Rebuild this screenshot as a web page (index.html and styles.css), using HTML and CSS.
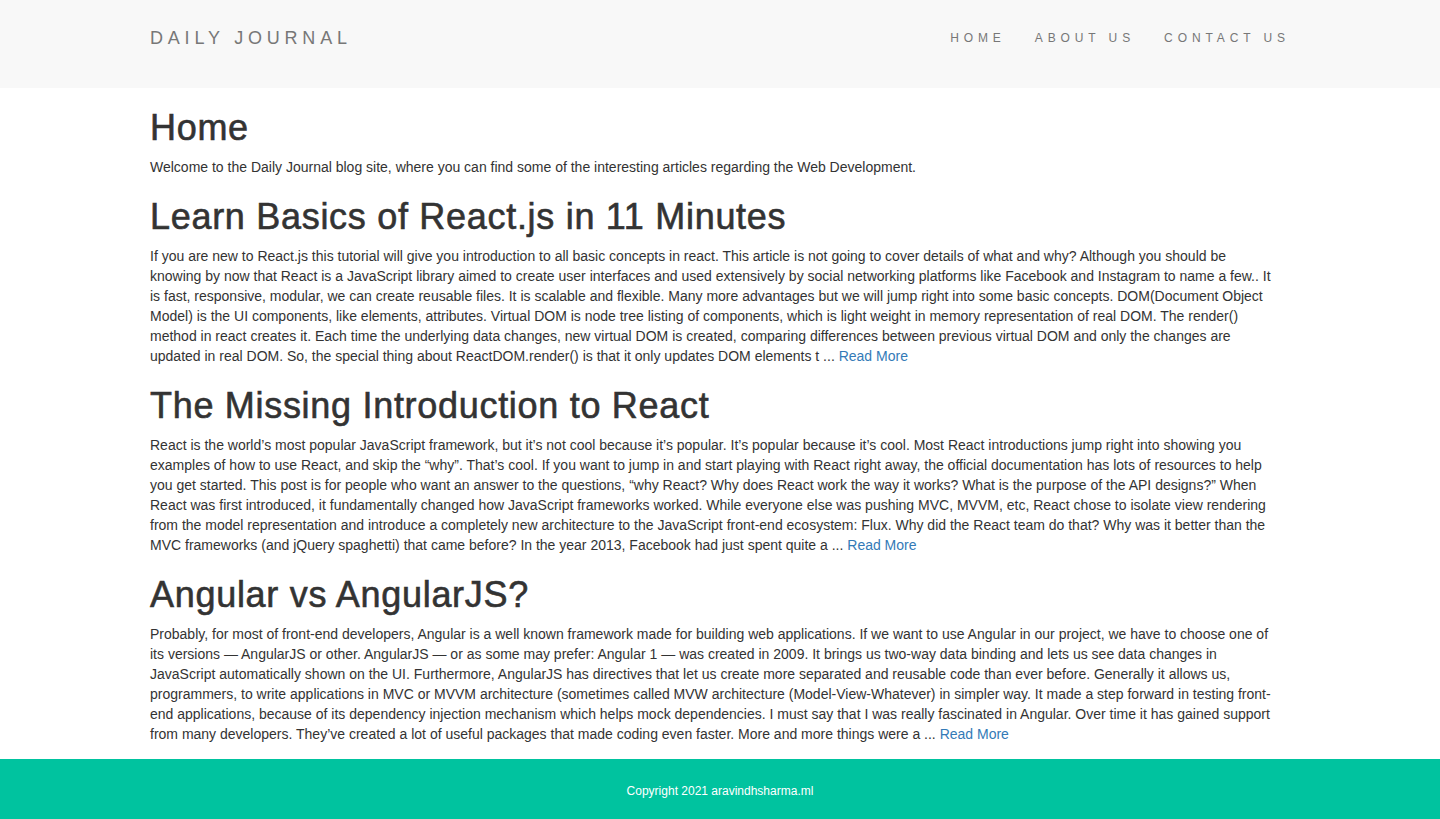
FILE: index.html
```html
<!DOCTYPE html>
<html lang="en">
<head>
<meta charset="utf-8">
<title>Daily Journal</title>
<link rel="stylesheet" href="styles.css">
</head>
<body>
<nav class="navbar">
  <div class="container navbar-inner">
    <a class="brand" href="#">DAILY JOURNAL</a>
    <ul class="nav-links">
      <li><a href="#">HOME</a></li>
      <li><a href="#">ABOUT US</a></li>
      <li><a href="#">CONTACT US</a></li>
    </ul>
  </div>
</nav>
<main class="container content">
  <h1>Home</h1>
  <p>Welcome to the Daily Journal blog site, where you can find some of the interesting articles regarding the Web Development.</p>

  <h1>Learn Basics of React.js in 11 Minutes</h1>
  <p>If you are new to React.js this tutorial will give you introduction to all basic concepts in react. This article is not going to cover details of what and why? Although you should be<br>knowing by now that React is a JavaScript library aimed to create user interfaces and used extensively by social networking platforms like Facebook and Instagram to name a few.. It<br>is fast, responsive, modular, we can create reusable files. It is scalable and flexible. Many more advantages but we will jump right into some basic concepts. DOM(Document Object<br>Model) is the UI components, like elements, attributes. Virtual DOM is node tree listing of components, which is light weight in memory representation of real DOM. The render()<br>method in react creates it. Each time the underlying data changes, new virtual DOM is created, comparing differences between previous virtual DOM and only the changes are<br>updated in real DOM. So, the special thing about ReactDOM.render() is that it only updates DOM elements t ... <a class="more" href="#">Read More</a></p>

  <h1>The Missing Introduction to React</h1>
  <p>React is the world’s most popular JavaScript framework, but it’s not cool because it’s popular. It’s popular because it’s cool. Most React introductions jump right into showing you<br>examples of how to use React, and skip the “why”. That’s cool. If you want to jump in and start playing with React right away, the official documentation has lots of resources to help<br>you get started. This post is for people who want an answer to the questions, “why React? Why does React work the way it works? What is the purpose of the API designs?” When<br>React was first introduced, it fundamentally changed how JavaScript frameworks worked. While everyone else was pushing MVC, MVVM, etc, React chose to isolate view rendering<br>from the model representation and introduce a completely new architecture to the JavaScript front-end ecosystem: Flux. Why did the React team do that? Why was it better than the<br>MVC frameworks (and jQuery spaghetti) that came before? In the year 2013, Facebook had just spent quite a ... <a class="more" href="#">Read More</a></p>

  <h1>Angular vs AngularJS?</h1>
  <p>Probably, for most of front-end developers, Angular is a well known framework made for building web applications. If we want to use Angular in our project, we have to choose one of<br>its versions — AngularJS or other. AngularJS — or as some may prefer: Angular 1 — was created in 2009. It brings us two-way data binding and lets us see data changes in<br>JavaScript automatically shown on the UI. Furthermore, AngularJS has directives that let us create more separated and reusable code than ever before. Generally it allows us,<br>programmers, to write applications in MVC or MVVM architecture (sometimes called MVW architecture (Model-View-Whatever) in simpler way. It made a step forward in testing front-<br>end applications, because of its dependency injection mechanism which helps mock dependencies. I must say that I was really fascinated in Angular. Over time it has gained support<br>from many developers. They’ve created a lot of useful packages that made coding even faster. More and more things were a ... <a class="more" href="#">Read More</a></p>
</main>
<footer class="footer">
  <p>Copyright 2021 aravindhsharma.ml</p>
</footer>
</body>
</html>
```

FILE: styles.css
```css
* { box-sizing: border-box; }

html, body {
  margin: 0;
  padding: 0;
}

body {
  font-family: "Liberation Sans", Arial, Helvetica, sans-serif;
  font-size: 14px;
  line-height: 20px;
  color: #333333;
  background: #ffffff;
}

a { text-decoration: none; }

.container {
  width: 1170px;
  margin: 0 auto;
  padding: 0 15px;
}

.navbar {
  background: #f8f8f8;
  height: 88px;
}

.navbar-inner {
  height: 88px;
  display: flex;
  align-items: center;
  justify-content: space-between;
  padding-bottom: 13px;
}

.brand {
  color: #777777;
  font-size: 18px;
  letter-spacing: 4.8px;
  line-height: 20px;
}

.nav-links {
  list-style: none;
  margin: 0;
  padding: 0;
  display: flex;
  gap: 29px;
}

.nav-links a {
  color: #777777;
  font-size: 12px;
  letter-spacing: 4.9px;
  line-height: 20px;
}

.content {
  padding-bottom: 5px;
}

h1 {
  font-size: 36px;
  font-weight: 500;
  line-height: 39px;
  letter-spacing: 0.7px;
  -webkit-text-stroke: 0.6px #333333;
  margin: 20px 0 10px;
  color: #333333;
}

p {
  margin: 0 0 10px;
}

.more {
  color: #337ab7;
}

.footer {
  background: #00c39f;
  height: 60px;
  color: #ffffff;
  font-size: 12px;
  text-align: center;
  padding-top: 24px;
}

.footer p {
  margin: 0;
  line-height: 16px;
}
```
